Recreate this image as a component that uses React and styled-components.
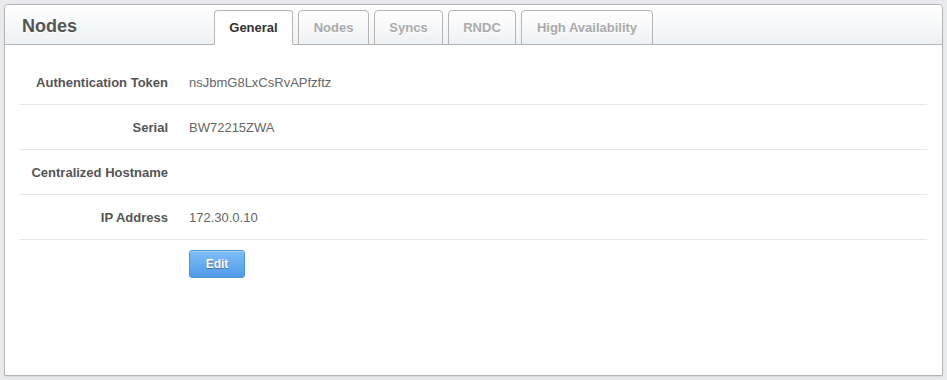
import styled, { createGlobalStyle } from "styled-components";

const GlobalStyle = createGlobalStyle`
  html, body {
    margin: 0;
    padding: 0;
    background: #e8eaed;
    font-family: "Liberation Sans", Arial, sans-serif;
  }
`;

const Page = styled.div`
  padding: 4px;
  height: 380px;
  box-sizing: border-box;
`;

const Panel = styled.section`
  height: 100%;
  box-sizing: border-box;
  background: #fff;
  border: 1px solid #b5b5b5;
  border-radius: 4px 4px 2px 2px;
  display: flex;
  flex-direction: column;
  box-shadow: 0 1px 1px rgba(0, 0, 0, 0.08);
`;

const Header = styled.header`
  height: 39px;
  flex: none;
  display: flex;
  align-items: flex-end;
  border-bottom: 1px solid #b5b5b5;
  background: linear-gradient(#ffffff, #eef1f4);
  border-radius: 4px 4px 0 0;
  padding-left: 17px;
`;

const Title = styled.h1`
  margin: 0;
  align-self: center;
  padding-top: 4px;
  font-size: 18px;
  font-weight: bold;
  color: #555;
  text-shadow: 0 1px 0 #fff;
  width: 192px;
`;

const Tabs = styled.nav`
  display: flex;
  gap: 5px;
  margin-bottom: -1px;
`;

const Tab = styled.div`
  width: ${(p) => p.$w}px;
  height: 35px;
  box-sizing: border-box;
  display: flex;
  align-items: center;
  justify-content: center;
  border: 1px solid #b5b5b5;
  border-bottom-color: ${(p) => (p.$active ? "#fff" : "#b5b5b5")};
  border-radius: 4px 4px 0 0;
  background: ${(p) => (p.$active ? "#fff" : "linear-gradient(#ffffff, #eef1f4)")};
  font-size: 13px;
  font-weight: bold;
  color: ${(p) => (p.$active ? "#333" : "#aaa")};
  text-shadow: 0 1px 0 #fff;
  white-space: nowrap;
  cursor: pointer;
`;

const Body = styled.div`
  padding: 15px 15px 0 15px;
`;

const Row = styled.div`
  display: grid;
  grid-template-columns: 148px 1fr;
  column-gap: 21px;
  align-items: center;
  height: 45px;
  border-bottom: 1px solid #e6e6e6;
  box-sizing: border-box;
`;

const ActionRow = styled.div`
  display: grid;
  grid-template-columns: 148px 1fr;
  column-gap: 21px;
  padding-top: 10px;
`;

const Label = styled.div`
  text-align: right;
  font-size: 13px;
  font-weight: bold;
  color: #555;
`;

const Value = styled.div`
  font-size: 13px;
  color: #666;
`;

const EditButton = styled.button`
  grid-column: 2;
  width: 56px;
  height: 28px;
  border: 1px solid #4596dc;
  border-radius: 3px;
  background: linear-gradient(#80bdf7, #4f9be9);
  color: #fff;
  font-family: "Liberation Sans", Arial, sans-serif;
  font-size: 12px;
  font-weight: bold;
  text-shadow: 0 1px 1px rgba(0, 0, 0, 0.35);
  box-shadow: inset 0 1px 0 rgba(255, 255, 255, 0.35);
  cursor: pointer;
`;

const fields = [
  { label: "Authentication Token", value: "nsJbmG8LxCsRvAPfzftz" },
  { label: "Serial", value: "BW72215ZWA" },
  { label: "Centralized Hostname", value: "" },
  { label: "IP Address", value: "172.30.0.10" },
];

const tabs = [
  { name: "General", w: 79, active: true },
  { name: "Nodes", w: 71 },
  { name: "Syncs", w: 69 },
  { name: "RNDC", w: 68 },
  { name: "High Availability", w: 132 },
];

const App = () => {
  return (
    <>
      <GlobalStyle />
      <Page>
        <Panel>
          <Header>
            <Title>Nodes</Title>
            <Tabs>
              {tabs.map((t) => (
                <Tab key={t.name} $active={t.active} $w={t.w}>
                  {t.name}
                </Tab>
              ))}
            </Tabs>
          </Header>
          <Body>
            {fields.map((f) => (
              <Row key={f.label}>
                <Label>{f.label}</Label>
                <Value>{f.value}</Value>
              </Row>
            ))}
            <ActionRow>
              <EditButton>Edit</EditButton>
            </ActionRow>
          </Body>
        </Panel>
      </Page>
    </>
  );
};

export default App;
